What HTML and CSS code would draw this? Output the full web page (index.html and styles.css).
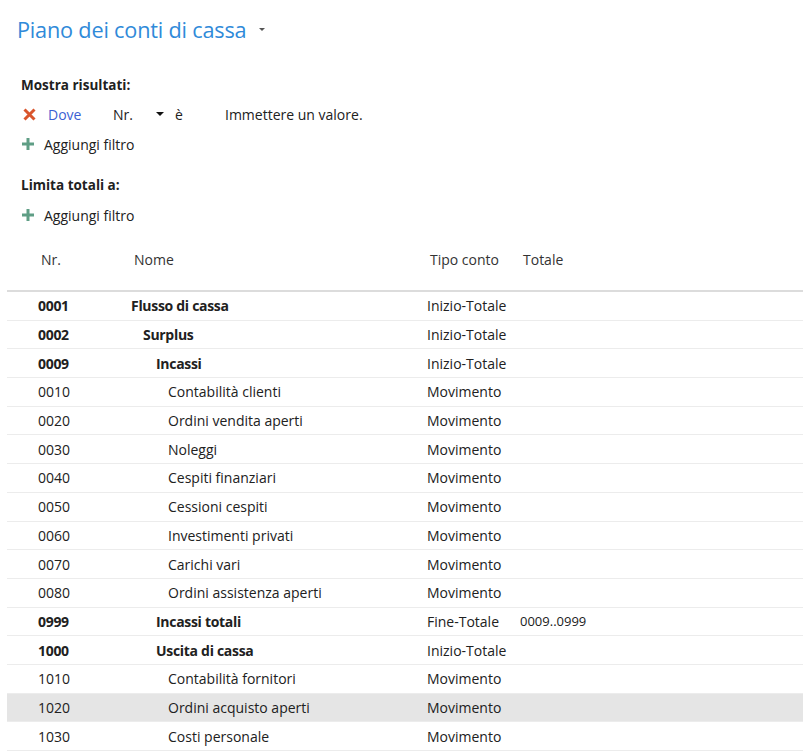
FILE: index.html
```html
<!DOCTYPE html>
<html lang="it">
<head>
<meta charset="utf-8">
<title>Piano dei conti di cassa</title>
<link rel="stylesheet" href="styles.css">
</head>
<body>
<div class="page">
  <header class="title-bar">
    <h1 class="title">Piano dei conti di cassa</h1>
    <span class="title-caret"></span>
  </header>

  <section class="filters">
    <div class="filter-label">Mostra risultati:</div>
    <div class="filter-row">
      <svg class="icon-x" width="13" height="13" viewBox="0 0 13 13"><path d="M1.5 1.5 L11.5 11.5 M11.5 1.5 L1.5 11.5" stroke="#d9552c" stroke-width="3" stroke-linecap="butt"/></svg>
      <span class="dove">Dove</span>
      <span class="field">Nr.</span>
      <span class="field-caret-box"><span class="field-caret"></span></span>
      <span class="op">è</span>
      <span class="value">Immettere un valore.</span>
    </div>
    <div class="add-row">
      <svg class="icon-plus" width="12" height="12" viewBox="0 0 12 12"><path d="M6 0 V12 M0 6 H12" stroke="#5f9e85" stroke-width="3"/></svg>
      <span>Aggiungi filtro</span>
    </div>

    <div class="filter-label second">Limita totali a:</div>
    <div class="add-row">
      <svg class="icon-plus" width="12" height="12" viewBox="0 0 12 12"><path d="M6 0 V12 M0 6 H12" stroke="#5f9e85" stroke-width="3"/></svg>
      <span>Aggiungi filtro</span>
    </div>
  </section>

  <section class="grid">
    <div class="grid-head">
      <span>Nr.</span><span>Nome</span><span>Tipo conto</span><span>Totale</span>
    </div>
    <div class="row bold"><span class="num">0001</span><span class="name l0">Flusso di cassa</span><span>Inizio-Totale</span><span></span></div>
    <div class="row bold"><span class="num">0002</span><span class="name l1">Surplus</span><span>Inizio-Totale</span><span></span></div>
    <div class="row bold"><span class="num">0009</span><span class="name l2">Incassi</span><span>Inizio-Totale</span><span></span></div>
    <div class="row"><span class="num">0010</span><span class="name l3">Contabilità clienti</span><span>Movimento</span><span></span></div>
    <div class="row"><span class="num">0020</span><span class="name l3">Ordini vendita aperti</span><span>Movimento</span><span></span></div>
    <div class="row"><span class="num">0030</span><span class="name l3">Noleggi</span><span>Movimento</span><span></span></div>
    <div class="row"><span class="num">0040</span><span class="name l3">Cespiti finanziari</span><span>Movimento</span><span></span></div>
    <div class="row"><span class="num">0050</span><span class="name l3">Cessioni cespiti</span><span>Movimento</span><span></span></div>
    <div class="row"><span class="num">0060</span><span class="name l3">Investimenti privati</span><span>Movimento</span><span></span></div>
    <div class="row"><span class="num">0070</span><span class="name l3">Carichi vari</span><span>Movimento</span><span></span></div>
    <div class="row"><span class="num">0080</span><span class="name l3">Ordini assistenza aperti</span><span>Movimento</span><span></span></div>
    <div class="row bold"><span class="num">0999</span><span class="name l2">Incassi totali</span><span>Fine-Totale</span><span class="tot">0009..0999</span></div>
    <div class="row bold"><span class="num">1000</span><span class="name l2">Uscita di cassa</span><span>Inizio-Totale</span><span></span></div>
    <div class="row"><span class="num">1010</span><span class="name l3">Contabilità fornitori</span><span>Movimento</span><span></span></div>
    <div class="row selected"><span class="num">1020</span><span class="name l3">Ordini acquisto aperti</span><span>Movimento</span><span></span></div>
    <div class="row"><span class="num">1030</span><span class="name l3">Costi personale</span><span>Movimento</span><span></span></div>
  </section>
</div>
</body>
</html>
```

FILE: styles.css
```css
* { box-sizing: border-box; }
html, body { margin: 0; padding: 0; background: #fff; }
body {
  font-family: "Open Sans", "Noto Sans", "DejaVu Sans", sans-serif;
  color: #212121;
  overflow: hidden;
}
.page { width: 803px; height: 756px; overflow: hidden; }

.title-bar {
  display: flex;
  align-items: center;
  padding: 14px 0 0 17px;
  height: 46px;
}
.title {
  margin: 0;
  font-weight: 400;
  font-size: 21.7px;
  letter-spacing: -0.2px;
  color: #2f8ad9;
  line-height: 30px;
}
.title-caret {
  margin-left: 13px;
  width: 0; height: 0;
  border-left: 3px solid transparent;
  border-right: 3px solid transparent;
  border-top: 3px solid #555;
  margin-top: -2px;
}

.filters { padding: 29px 0 0 21px; font-size: 14px; }
.filter-label { font-weight: 700; font-size: 13.5px; line-height: 20px; height: 20px; }
.filter-label.second { margin-top: 21px; }
.filter-row {
  display: flex; align-items: center; height: 20px; margin-top: 9px;
}
.icon-x { margin-left: 2px; flex: none; }
.dove { color: #3c5fd3; margin-left: 12px; width: 65px; flex: none; }
.field { width: 43px; flex: none; }
.field-caret-box { width: 19px; flex: none; display: flex; align-items: center; }
.field-caret {
  width: 0; height: 0;
  border-left: 4px solid transparent;
  border-right: 4px solid transparent;
  border-top: 4px solid #111;
}
.op { width: 50px; flex: none; }
.value { flex: none; }
.add-row {
  display: flex; align-items: center; height: 20px; margin-top: 10px; gap: 10px;
}
.add-row .icon-plus { margin-left: 1px; flex: none; }

.grid { margin-top: 20px; padding-left: 7px; font-size: 14px; }
.grid-head, .row {
  display: grid;
  grid-template-columns: 93px 296px 93px 1fr;
  align-items: center;
  padding-left: 31px;
}
.grid-head {
  height: 47px;
  padding-bottom: 17px;
  border-bottom: 2px solid #dcdcdc;
  color: #333;
}
.grid-head span { padding-left: 3px; }
.row {
  height: 28.7px;
  border-bottom: 1px solid #ececec;
}
.row.bold .num, .row.bold .name { font-weight: 700; letter-spacing: -0.3px; }
.row.selected { background: #e5e5e5; }
.name.l0 { padding-left: 0; }
.name.l1 { padding-left: 12px; }
.name.l2 { padding-left: 25px; }
.name.l3 { padding-left: 37px; }
.tot { font-size: 13px; }
```
